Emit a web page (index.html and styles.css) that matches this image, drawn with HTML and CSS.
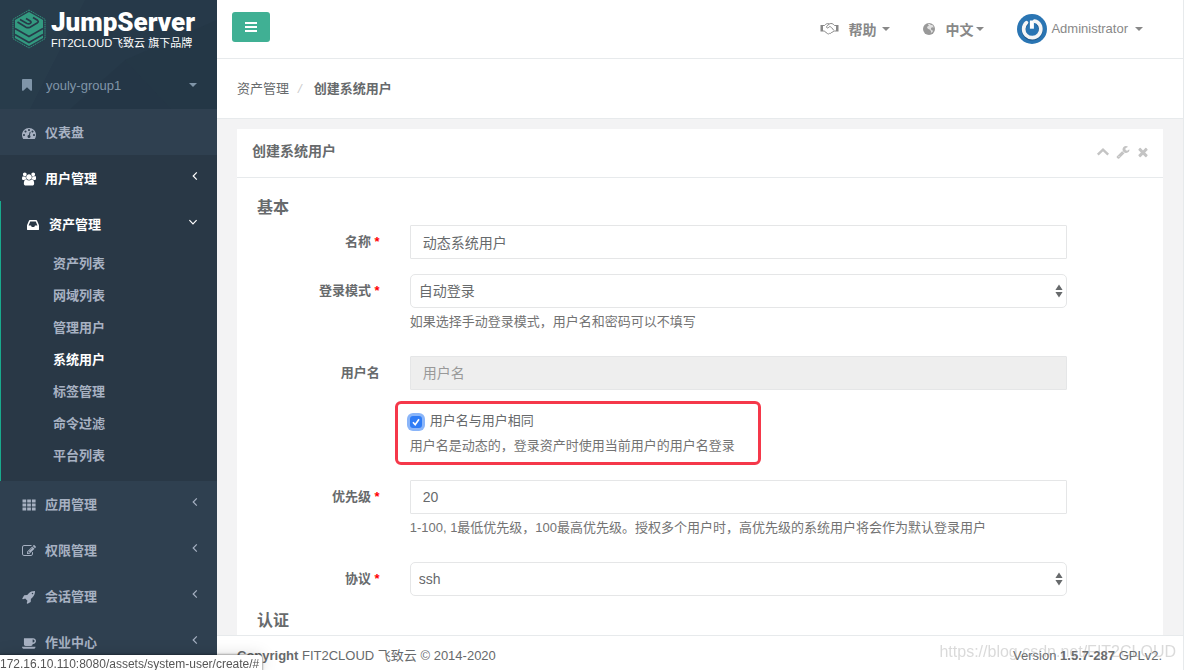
FILE: index.html
```html
<!DOCTYPE html>
<html lang="zh-CN">
<head>
<meta charset="utf-8">
<title>创建系统用户 - JumpServer</title>
<link rel="stylesheet" href="styles.css">
</head>
<body>
<svg class="defs" aria-hidden="true">
  <symbol id="angle-left" viewBox="0 0 8 10"><path d="M5.8 1.4 2.2 5l3.6 3.6" fill="none" stroke="currentColor" stroke-width="1.2"/></symbol>
  <symbol id="angle-down" viewBox="0 0 10 8"><path d="M1.4 2.2 5 5.8l3.6-3.6" fill="none" stroke="currentColor" stroke-width="1.2"/></symbol>
  <symbol id="caret" viewBox="0 0 8 4"><path d="M0 0h8L4 4z" fill="currentColor"/></symbol>
  <symbol id="sorter" viewBox="0 0 8 14"><path d="M4 .6l3.600 5.400H.4zM4 13.400l3.600-5.400H.4z" fill="currentColor"/></symbol>
</svg>
<div class="app">
  <aside class="sidebar">
    <div class="brand-area">
      <svg class="pattern" viewBox="0 0 217 109" preserveAspectRatio="none" aria-hidden="true">
        <path d="M0 0h85L30 109H0z" fill="#2c404f" opacity=".4"/>
        <path d="M125 60l46 49H70z" fill="#203140" opacity=".3"/>
        <path d="M125 60 217 20v89h-46z" fill="#223442" opacity=".35"/>
      </svg>
      <a class="brand" href="#">
        <svg class="brand-mark" viewBox="0 0 34 40" aria-hidden="true">
          <path d="M17 1 33 10.300v19.400L17 39 1 29.700V10.300z" fill="none" stroke="#2f8f7a" stroke-width="1" stroke-dasharray="1.500 .6"/>
          <path d="M17 3 31 11v18l-14 8L3 29V11z" fill="#339a80"/>
          <path d="M3 19.500 17 27.500 31 19.500M3 25.500 17 33.500 31 25.500" fill="none" stroke="#273a49" stroke-width="1.600"/>
          <path d="M5.500 13 14 18.200q2 1 4 0l7.500-4.500q1.500-1.200 0-2.400L21 8.500M8 10.500 15 14.500q2 .9 3.500-.3 1.200-1.200-.3-2.200L14 9.500" fill="none" stroke="#273a49" stroke-width="1.700"/>
        </svg>
        <span class="brand-text"><strong>JumpServer</strong><small>FIT2CLOUD飞致云 旗下品牌</small></span>
      </a>
      <button class="group" type="button">
        <svg class="icon" viewBox="0 0 1792 1792"><path d="M1420 128q23 0 44 9 33 13 52.500 41t19.500 62v1289q0 34-19.500 62t-52.500 41q-19 8-44 8-48 0-83-32l-441-424-441 424q-36 33-83 33-23 0-44-9-33-13-52.500-41t-19.500-62v-1289q0-34 19.500-62t52.500-41q21-9 44-9h1048z"/></svg>
        <span>youly-group1</span>
        <svg class="caret"><use href="#caret"/></svg>
      </button>
    </div>
    <nav>
      <ul class="menu">
        <li><a class="item" href="#"><svg class="icon" viewBox="0 0 1792 1792"><path d="M384 1152q0-53-37.500-90.500t-90.500-37.500-90.500 37.500-37.500 90.500 37.500 90.500 90.500 37.500 90.500-37.500 37.500-90.500zm192-448q0-53-37.500-90.500t-90.500-37.500-90.500 37.500-37.500 90.500 37.500 90.500 90.500 37.500 90.500-37.500 37.500-90.500zm428 481l101-382q6-26-7.500-48.500t-38.500-29.500-48 6.500-30 39.500l-101 382q-60 5-107 43.500t-63 98.500q-20 77 20 146t117 89 146-20 89-117q16-60-6-117t-72-91zm660-33q0-53-37.500-90.500t-90.500-37.500-90.500 37.500-37.500 90.500 37.500 90.500 90.500 37.500 90.500-37.500 37.500-90.500zm-640-640q0-53-37.500-90.500t-90.500-37.500-90.500 37.500-37.500 90.500 37.500 90.500 90.500 37.500 90.500-37.500 37.500-90.500zm448 192q0-53-37.500-90.500t-90.500-37.500-90.500 37.500-37.500 90.500 37.500 90.500 90.500 37.500 90.500-37.500 37.500-90.500zm320 448q0 261-141 483-19 29-54 29h-1402q-35 0-54-29-141-221-141-483 0-182 71-348t191-286 286-191 348-71 348 71 286 191 191 286 71 348z"/></svg><span>仪表盘</span></a></li>
        <li class="hover"><a class="item" href="#"><svg class="icon" viewBox="0 0 1920 1792"><path d="M593 896q-162 5-265 128h-134q-82 0-138-40.500t-56-118.500q0-353 124-353 6 0 43.500 21t97.500 42.500 119 21.500q67 0 133-23-5 37-5 66 0 159 90 292zm1071 637q0 120-73 189.500t-194 69.500h-874q-121 0-194-69.500t-73-189.500q0-53 3.500-103.500t14-109 26.500-108.500 43-97.500 62-81 85.500-53.500 111.500-20q10 0 43 21.500t73 48 107 48 135 21.500 135-21.500 107-48 73-48 43-21.500q61 0 111.500 20t85.500 53.500 62 81 43 97.500 26.500 108.500 14 109 3.500 103.500zm-1024-1277q0 106-75 181t-181 75-181-75-75-181 75-181 181-75 181 75 75 181zm704 384q0 159-112.500 271.500t-271.500 112.500-271.500-112.500-112.500-271.500 112.500-271.500 271.500-112.500 271.500 112.500 112.500 271.500zm576 225q0 78-56 118.500t-138 40.500h-134q-103-123-265-128 90-133 90-292 0-29-5-66 66 23 133 23 59 0 119-21.500t97.500-42.500 43.500-21q124 0 124 353zm-128-609q0 106-75 181t-181 75-181-75-75-181 75-181 181-75 181 75 75 181z"/></svg><span>用户管理</span><svg class="angle"><use href="#angle-left"/></svg></a></li>
        <li class="open"><a class="item" href="#"><svg class="icon" viewBox="0 0 1792 1792"><path d="M1151 960h316q-1-3-2.500-8t-2.500-8l-212-496h-708l-212 496q-1 2-2.500 8t-2.500 8h316l95 192h320zm513 30v482q0 26-19 45t-45 19h-1408q-26 0-45-19t-19-45v-482q0-62 25-123l238-552q10-25 36.500-42t52.500-17h832q26 0 52.500 17t36.500 42l238 552q25 61 25 123z"/></svg><span>资产管理</span><svg class="angle"><use href="#angle-down"/></svg></a>
          <ul class="submenu">
            <li><a href="#">资产列表</a></li>
            <li><a href="#">网域列表</a></li>
            <li><a href="#">管理用户</a></li>
            <li><a class="current" href="#">系统用户</a></li>
            <li><a href="#">标签管理</a></li>
            <li><a href="#">命令过滤</a></li>
            <li><a href="#">平台列表</a></li>
          </ul>
        </li>
        <li><a class="item" href="#"><svg class="icon" viewBox="0 0 14 14"><path d="M.5 1.500h3.700v3H.5zm4.700 0h3.700v3H5.200zm4.700 0h3.700v3H9.900zM.5 5.500h3.700v3H.5zm4.700 0h3.700v3H5.200zm4.700 0h3.700v3H9.900zM.5 9.500h3.700v3H.5zm4.700 0h3.700v3H5.200zm4.700 0h3.700v3H9.900z"/></svg><span>应用管理</span><svg class="angle"><use href="#angle-left"/></svg></a></li>
        <li><a class="item" href="#"><svg class="icon" viewBox="0 0 1792 1792"><path d="M888 1184l116-116-152-152-116 116v56h96v96h56zm440-720q-16-16-33 1l-350 350q-17 17-1 33t33-1l350-350q17-17 1-33zm80 594v190q0 119-84.500 203.500t-203.500 84.500h-832q-119 0-203.500-84.500t-84.500-203.500v-832q0-119 84.500-203.500t203.500-84.500h832q63 0 117 25 15 7 18 23 3 17-9 29l-49 49q-14 14-32 8-23-6-45-6h-832q-66 0-113 47t-47 113v832q0 66 47 113t113 47h832q66 0 113-47t47-113v-126q0-13 9-22l64-64q15-15 35-7t20 29zm-96-738l288 288-672 672h-288v-288zm444 132l-92 92-288-288 92-92q28-28 68-28t68 28l152 152q28 28 28 68t-28 68z"/></svg><span>权限管理</span><svg class="angle"><use href="#angle-left"/></svg></a></li>
        <li><a class="item" href="#"><svg class="icon" viewBox="0 0 1792 1792"><path d="M1440 448q0-40-28-68t-68-28-68 28-28 68 28 68 68 28 68-28 28-68zm224-288q0 249-75.500 430.500t-253.500 360.500q-81 80-195 176l-20 379q-2 16-16 26l-384 224q-7 4-16 4-12 0-23-9l-64-64q-13-14-8-32l85-276-281-281-276 85q-3 1-9 1-14 0-23-9l-64-64q-17-19-5-39l224-384q10-14 26-16l379-20q96-114 176-195 188-187 358-258t431-71q14 0 24 9.500t10 22.500z"/></svg><span>会话管理</span><svg class="angle"><use href="#angle-left"/></svg></a></li>
        <li><a class="item" href="#"><svg class="icon" viewBox="0 0 1856 1792"><path d="M1664 640q0-80-56-136t-136-56h-64v384h64q80 0 136-56t56-136zm-1664 768h1792q0 106-75 181t-181 75h-1280q-106 0-181-75t-75-181zm1856-768q0 159-112.500 271.500t-271.500 112.500h-64v32q0 92-66 158t-158 66h-704q-92 0-158-66t-66-158v-736q0-26 19-45t45-19h1152q159 0 271.500 112.500t112.500 271.500z"/></svg><span>作业中心</span><svg class="angle"><use href="#angle-left"/></svg></a></li>
      </ul>
    </nav>
  </aside>

  <div class="page">
    <header class="topbar">
      <button class="toggle" type="button" aria-label="菜单"><svg viewBox="0 0 12 10"><path d="M0 0h12v2H0zM0 4h12v2H0zM0 8h12v2H0z" fill="#fff"/></svg></button>
      <div class="top-links">
        <button class="top-link help" type="button">
          <svg class="handshake" viewBox="0 0 19 13"><path d="M.5 3H3v6.500H.5zM16 3h2.500v6.500H16z" fill="currentColor"/><path d="M3 3.500h1.500C6 1.800 7 1.300 9.300 1.900 11.500 1 13 1.600 14.500 3.500H16M3 9h1.200l3.300 2.600c.8.600 1.500.4 2-.2 1 .3 1.700-.2 1.900-.9.900.2 1.500-.4 1.600-1.200L14.500 9H16M9.300 1.900 6.600 4.600c-.5.900.8 2.200 2.200.7l1-.8c.8 0 3 2.200 3.700 3.600" fill="none" stroke="currentColor" stroke-width="1"/></svg>
          <b>帮助</b><svg class="caret"><use href="#caret"/></svg>
        </button>
        <button class="top-link lang" type="button">
          <svg class="globe" viewBox="0 0 12 12"><circle cx="6" cy="6" r="6" fill="currentColor"/><path d="M5.300.8 7 1l.8 1 1.600.1 1.500 2.300-1.200-.2-1.500.6-.4 1.500 1.100 1 1.300.4-.8 1.400-1.500.8.1-1.700-1-1.500-2.200-.9-.9-1.700L5 3.300l1-.8-1-.7z" fill="#fff" opacity=".7"/></svg>
          <b>中文</b><svg class="caret"><use href="#caret"/></svg>
        </button>
        <button class="top-link user" type="button">
          <svg class="avatar" viewBox="0 0 30 30"><circle cx="15" cy="15" r="15" fill="#2a75b3"/><path d="M9.500 8.700a8.600 8.600 0 1 0 11.600.2" fill="none" stroke="#1c5688" stroke-width="4.200" stroke-linecap="round" transform="translate(0 .7)"/><path d="M14.900 6.500v8.200" stroke="#fff" stroke-width="4"/><path d="M9.500 8.700a8.600 8.600 0 1 0 11-.4c-1-.7-1.800-1-3-1.200" fill="none" stroke="#f4f5f6" stroke-width="3.700" stroke-linecap="round"/></svg>
          <span>Administrator</span><svg class="caret"><use href="#caret"/></svg>
        </button>
      </div>
    </header>
    <nav class="crumbs" aria-label="路径"><a href="#">资产管理</a><i>/</i><strong>创建系统用户</strong></nav>
    <main class="content">
      <section class="panel">
        <header class="panel-head">
          <h1>创建系统用户</h1>
          <div class="tools">
            <button type="button" aria-label="折叠"><svg viewBox="0 0 14 14"><path d="M1.800 9.700 7 4.600l5.200 5.100" fill="none" stroke="currentColor" stroke-width="2.400"/></svg></button>
            <button type="button" aria-label="设置"><svg viewBox="0 0 1792 1792"><path fill="currentColor" d="M448 1472q0-26-19-45t-45-19-45 19-19 45 19 45 45 19 45-19 19-45zm644-420l-682 682q-37 37-90 37-52 0-91-37l-106-108q-38-36-38-90 0-53 38-91l681-681q39 98 114.500 173.500t173.500 114.500zm634-435q0 39-23 106-47 134-164.500 217.500t-258.500 83.500q-185 0-316.500-131.500t-131.500-316.500 131.500-316.500 316.500-131.500q58 0 121.500 16.500t107.500 46.500q16 11 16 28t-16 28l-293 169v224l193 107q5-3 79-48.500t135.500-81 70.500-35.500q15 0 23.500 10t8.500 25z"/></svg></button>
            <button type="button" aria-label="关闭"><svg viewBox="0 0 1792 1792"><path fill="currentColor" d="M1490 1322q0 40-28 68l-136 136q-28 28-68 28t-68-28l-294-294-294 294q-28 28-68 28t-68-28l-136-136q-28-28-28-68t28-68l294-294-294-294q-28-28-28-68t28-68l136-136q28-28 68-28t68 28l294 294 294-294q28-28 68-28t68 28l136 136q28 28 28 68t-28 68l-294 294 294 294q28 28 28 68z"/></svg></button>
          </div>
        </header>
        <form class="form">
          <h2>基本</h2>
          <div class="row">
            <label for="name">名称 <em>*</em></label>
            <div><input class="control" id="name" type="text" value="动态系统用户"></div>
          </div>
          <div class="row">
            <label for="mode">登录模式 <em>*</em></label>
            <div>
              <div class="select"><select class="control" id="mode"><option>自动登录</option><option>手动登录</option></select><svg><use href="#sorter"/></svg></div>
              <p class="hint">如果选择手动登录模式，用户名和密码可以不填写</p>
            </div>
          </div>
          <div class="row">
            <label for="username">用户名</label>
            <div><input class="control" id="username" type="text" placeholder="用户名" disabled></div>
          </div>
          <div class="row">
            <div class="same-user">
              <label class="check" for="same"><input id="same" type="checkbox" checked><span>用户名与用户相同</span></label>
              <p class="hint">用户名是动态的，登录资产时使用当前用户的用户名登录</p>
            </div>
          </div>
          <div class="row">
            <label for="priority">优先级 <em>*</em></label>
            <div><input class="control" id="priority" type="text" value="20">
              <p class="hint">1-100, 1最低优先级，100最高优先级。授权多个用户时，高优先级的系统用户将会作为默认登录用户</p></div>
          </div>
          <div class="row">
            <label for="protocol">协议 <em>*</em></label>
            <div><div class="select"><select class="control" id="protocol"><option>ssh</option><option>rdp</option></select><svg><use href="#sorter"/></svg></div></div>
          </div>
          <h2>认证</h2>
        </form>
      </section>
    </main>
    <footer class="footer">
      <span><strong>Copyright</strong> FIT2CLOUD 飞致云 © 2014-2020</span>
      <span>Version <strong>1.5.7-287</strong> GPLv2.</span>
    </footer>
  </div>
</div>
<div class="watermark">https://blog.csdn.net/FIT2CLOUD</div>
<div class="status">172.16.10.110:8080/assets/system-user/create/#</div>
</body>
</html>
```

FILE: styles.css
```css
*, *::before, *::after { box-sizing: border-box; }
body {
  margin: 0;
  font: 13px/18px "Liberation Sans", "Noto Sans CJK SC", sans-serif;
  color: #676a6c;
  background: #fff;
}
button, input, select { font-family: inherit; color: inherit; }
button { border: 0; padding: 0; background: none; cursor: pointer; }
a { color: inherit; text-decoration: none; }
ul { margin: 0; padding: 0; list-style: none; }
.defs { position: absolute; width: 0; height: 0; }
.caret { width: 8px; height: 4px; flex: none; }

.app { display: flex; height: 100vh; overflow: hidden; }

/* Sidebar */
.sidebar { flex: 0 0 217px; background: #2f4050; color: #a7b1c2; }
.brand-area { position: relative; height: 109px; background: #263949; }
.pattern { position: absolute; inset: 0; width: 100%; height: 100%; }
.brand { position: relative; display: flex; gap: 5px; padding: 9px 0 0 12px; height: 62px; }
.brand-mark { width: 34px; height: 40px; }
.brand-text { display: flex; flex-direction: column; color: #fff; white-space: nowrap; }
.brand-text strong { font: 900 26px/27px Roboto, sans-serif; }
.brand-text small { font-size: 11px; line-height: 15px; }
.group {
  position: relative;
  display: flex;
  align-items: center;
  width: 100%;
  height: 46px;
  padding: 0 20px;
  font-size: 13px;
  color: #8095a8;
}
.group span { flex: 1; margin-left: 12px; text-align: left; }
.icon { flex: none; width: 14px; height: 14px; fill: currentColor; }
.item { display: flex; align-items: center; height: 46px; padding: 2px 17px 0 22px; font-weight: 600; }
.item span { flex: 1; margin-left: 9px; }
.angle { width: 10px; height: 10px; margin-bottom: 6px; }
.hover, .open { background: #293846; }
.hover .item, .open .item { color: #fff; }
.open { border-left: 1px solid #19aa8d; padding-bottom: 9px; }
.open .item { padding-left: 25px; padding-right: 19px; }
.submenu { padding-top: 1px; }
.submenu a { display: block; padding: 7px 10px 7px 52px; font-weight: 600; }
.submenu .current { color: #fff; }

/* Page */
.page {
  flex: 1;
  min-width: 0;
  display: flex;
  flex-direction: column;
  margin-right: 1px;
  border-right: 1px solid #e7eaec;
  background: #f3f3f4;
}
.topbar {
  display: flex;
  justify-content: space-between;
  flex: none;
  height: 59px;
  padding: 0 40px 0 15px;
  background: #fff;
  border-bottom: 1px solid #e7eaec;
}
.toggle {
  display: grid;
  place-items: center;
  width: 38px;
  height: 30px;
  margin-top: 12px;
  border-radius: 3px;
  background: #40b094;
}
.toggle svg { width: 12px; height: 10px; }
.top-links { display: flex; gap: 33px; padding-bottom: 1px; }
.top-link { display: flex; align-items: center; font-size: 14px; color: #888; }
.help b { margin: 0 6px 0 9px; }
.lang b { margin: 0 3px 0 10px; }
.handshake { width: 19px; height: 13px; }
.globe { width: 12px; height: 12px; color: #999; }
.avatar { width: 30px; height: 30px; }
.user { font-size: 13px; }
.user span { margin: 0 7px 0 4px; }
.crumbs {
  display: flex;
  align-items: center;
  flex: none;
  height: 60px;
  padding: 0 20px;
  background: #fff;
  border-bottom: 1px solid #e7eaec;
}
.crumbs i { margin: 0 12px 0 9px; color: #ccc; }
.content { flex: 1; min-height: 0; overflow: hidden; padding: 10px 20px 0; }

.panel { background: #fff; }
.panel-head {
  display: flex;
  justify-content: space-between;
  align-items: center;
  height: 49px;
  padding: 0 13px 4px 15px;
  border-bottom: 1px solid #e7eaec;
}
.panel-head h1 { margin: 0; font-size: 14px; line-height: 20px; }
.tools { display: flex; gap: 6px; padding-top: 1px; color: #c4c4c4; }
.tools svg { display: block; width: 14px; height: 14px; }

.form { padding: 20px 20px 40px; }
.form h2 { margin: 0 0 7px; font-size: 16px; line-height: 20px; }
.row {
  display: grid;
  grid-template-columns: 2fr 9fr 1fr;
  margin: 0 -15px 15px;
}
.row > * { padding: 0 15px; min-width: 0; }
.row > label { padding-top: 8px; text-align: right; font-weight: 700; }
.row em { color: #f00; font-style: normal; }
.control {
  display: block;
  width: 100%;
  height: 34px;
  padding: 6px 12px;
  font-size: 14px;
  line-height: 20px;
  border: 1px solid #e5e6e7;
  border-radius: 1px;
  background: #fff;
}
.control:disabled { background: #eee; }
.control::placeholder { color: #999; }
.select { display: grid; align-items: center; }
.select > * { grid-area: 1 / 1; }
.select .control { appearance: none; padding: 0 8px; border-radius: 5px; }
.select svg { justify-self: end; width: 8px; height: 14px; margin-right: 4px; pointer-events: none; }
.hint { margin: 5px 0 10px; color: #737373; }
.same-user { position: relative; grid-column: 2; min-height: 60px; padding-top: 6px; }
.same-user .hint { margin: 6px 0 0; }
.same-user::after {
  content: "";
  position: absolute;
  inset: -4px auto 0 0;
  width: 366px;
  border: 3px solid #f5384a;
  border-radius: 6px;
  pointer-events: none;
}
.check { display: flex; align-items: center; gap: 8px; line-height: 20px; }
.check input {
  appearance: none;
  width: 12px;
  height: 12px;
  margin: 1px 0 0;
  border-radius: 3px;
  background: #2f7cf6 url("data:image/svg+xml,%3Csvg xmlns='http://www.w3.org/2000/svg' viewBox='0 0 12 12'%3E%3Cpath d='M3 6.300 5.200 8.700 9 3.300' fill='none' stroke='white' stroke-width='1.700'/%3E%3C/svg%3E");
  box-shadow: 0 0 0 3px #8ab5f9;
}

.footer {
  display: flex;
  justify-content: space-between;
  flex: none;
  height: 35px;
  padding: 11px 21px 0 20px;
  background: #fff;
  border-top: 1px solid #e7eaec;
}

/* Overlays */
.watermark {
  position: fixed;
  right: 9px;
  bottom: 8px;
  font-size: 16px;
  line-height: 20px;
  color: rgba(150, 150, 150, .35);
}
.status {
  position: fixed;
  left: 0;
  bottom: 0;
  height: 15px;
  padding-right: 3px;
  font-size: 12px;
  line-height: 18px;
  color: #555;
  background: #fff;
  border-top-right-radius: 3px;
  box-shadow: 0 0 2px 1px rgba(0, 0, 0, .3), 0 0 16px rgba(0, 0, 0, .15);
  white-space: nowrap;
}
```
